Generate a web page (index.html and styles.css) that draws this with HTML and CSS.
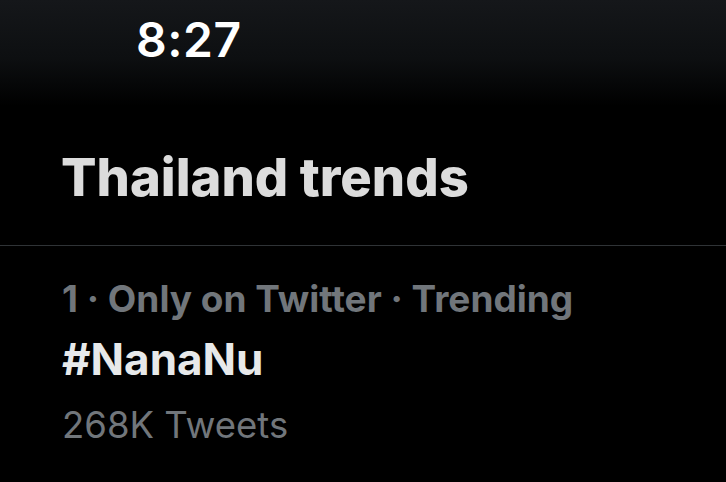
FILE: index.html
```html
<!DOCTYPE html>
<html lang="en">
<head>
    <meta charset="UTF-8">
    <meta name="viewport" content="width=device-width, initial-scale=1.0">
    <title>Thailand trends</title>
    <link rel="stylesheet" href="styles.css">
</head>
<body>
    <div class="status-bar">
        <span class="time">8:27</span>
    </div>
    <div class="header">
        <h1>Thailand trends</h1>
    </div>
    <div class="trend">
        <p class="trend-meta">1 · Only on Twitter · Trending</p>
        <p class="trend-name">#NanaNu</p>
        <p class="trend-count">268K Tweets</p>
    </div>
</body>
</html>
```

FILE: styles.css
```css
body, h1, p {
    margin: 0;
    padding: 0;
}

body {
    font-family: Inter, "Noto Sans", sans-serif;
    background-color: #000;
    color: #e7e9ea;
    width: 726px;
    height: 482px;
    overflow: hidden;
}

.status-bar {
    height: 106px;
    background: linear-gradient(to bottom, #15171a 0%, #0d0f11 55%, #000 100%);
    padding-left: 136px;
    box-sizing: border-box;
}

.time {
    display: block;
    padding-top: 13px;
    font-size: 48px;
    font-weight: 600;
    color: #fff;
    line-height: 54px;
    letter-spacing: 0.5px;
}

.header {
    height: 140px;
    border-bottom: 1px solid #2f3336;
    padding-left: 61px;
    box-sizing: border-box;
}

.header h1 {
    padding-top: 41px;
    font-size: 52.5px;
    font-weight: 800;
    line-height: 60px;
    color: #dcdcdc;
}

.trend {
    padding: 30px 62px 0;
}

.trend-meta {
    font-size: 37px;
    font-weight: 700;
    color: #71767b;
    line-height: 46px;
}

.trend-name {
    margin-top: 12px;
    font-size: 44px;
    font-weight: 700;
    color: #e7e9ea;
    line-height: 50px;
}

.trend-count {
    margin-top: 18px;
    font-size: 36.5px;
    font-weight: 400;
    color: #71767b;
    line-height: 46px;
}
```
